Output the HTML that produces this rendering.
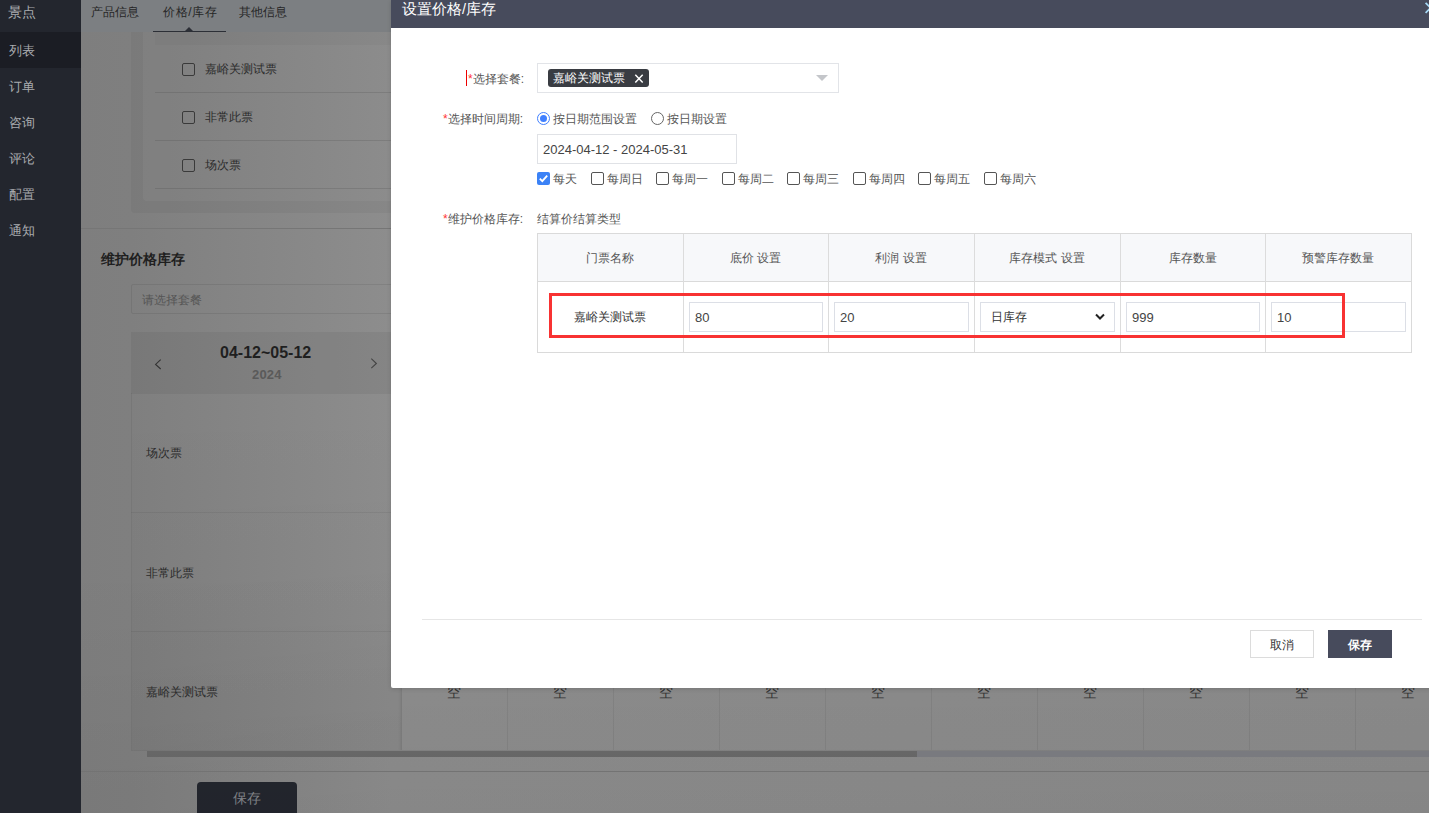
<!DOCTYPE html>
<html><head><meta charset="utf-8">
<style>
*{box-sizing:border-box;margin:0;padding:0}
html,body{width:1429px;height:813px;overflow:hidden}
body{position:relative;font-family:"Liberation Sans",sans-serif;font-size:12px;background:#858585;color:#333}
.a{position:absolute}
.t{position:absolute;white-space:nowrap;line-height:1}
/* sidebar */
#side{left:0;top:0;width:81px;height:813px;background:#23262e}
.si{left:0;width:81px;height:36px;line-height:38px;padding-left:9px;color:#a9abaf;font-size:13px}
/* main bg */
#main{left:81px;top:0;width:1348px;height:813px;background:linear-gradient(90deg,#7e7e7e 0px,#7f7f7f 50px,#8d8d8d 310px,#8b8b8b 100%)}
#topbar{left:81px;top:0;width:1348px;height:32px;background:#7c7f82}
.tab{top:0;height:32px;line-height:25px;font-size:12px;color:#262626}
/* modal */
#modal{left:391px;top:0;width:1050px;height:688px;background:#fff;border-radius:0 0 2px 2px;box-shadow:0 1px 4px rgba(0,0,0,.15)}
#mhead{left:0;top:0;width:1050px;height:28px;background:#474b5c}
.lbl{font-size:12px;color:#555}
.req{color:#f33}
.box{position:absolute;border:1px solid #dcdfe6;background:#fff}
.th{position:absolute;top:0;height:48px;line-height:48px;text-align:center;font-size:12px;color:#555;border-right:1px solid #e0e2e6}
</style></head>
<body>
<div id="main" class="a"></div>
<div id="side" class="a">
  <div class="a si" style="top:-6px;font-size:14px;padding-left:8px;line-height:36px">景点</div>
  <div class="a si" style="top:32px;background:#1b1d24">列表</div>
  <div class="a si" style="top:68px">订单</div>
  <div class="a si" style="top:104px">咨询</div>
  <div class="a si" style="top:140px">评论</div>
  <div class="a si" style="top:176px">配置</div>
  <div class="a si" style="top:212px">通知</div>
</div>
<div id="topbar" class="a"></div>
<div class="t" style="left:91px;top:6px;font-size:12px;color:#262626">产品信息</div>
<div class="t" style="left:163px;top:6px;font-size:12px;letter-spacing:0.6px;color:#262626">价格/库存</div>
<div class="t" style="left:239px;top:6px;font-size:12px;color:#262626">其他信息</div>
<div class="a" style="left:153px;top:31px;width:73px;height:1px;background:#2c2f36"></div>
<div class="a" style="left:185px;top:27px;width:0;height:0;border-left:4px solid transparent;border-right:4px solid transparent;border-bottom:4px solid #2c2f36"></div>

<!-- panel -->
<div class="a" style="left:131px;top:32px;width:300px;height:181px;background:rgba(0,0,0,.04);border-radius:0 0 4px 4px"></div>
<div class="a" style="left:143px;top:32px;width:300px;height:169px;background:rgba(255,255,255,.045);border-radius:0 0 4px 4px"></div>
<div class="a" style="left:155px;top:32px;width:300px;height:13px;background:rgba(0,0,0,.025)"></div>
<div class="a" style="left:155px;top:92px;width:300px;height:1px;background:rgba(0,0,0,.1)"></div>
<div class="a" style="left:155px;top:140px;width:300px;height:1px;background:rgba(0,0,0,.1)"></div>
<div class="a" style="left:155px;top:188px;width:300px;height:1px;background:rgba(0,0,0,.1)"></div>
<div class="a" style="left:182px;top:63px;width:13px;height:13px;border:1px solid #3a3a3a;border-radius:2px"></div>
<div class="a" style="left:182px;top:111px;width:13px;height:13px;border:1px solid #3a3a3a;border-radius:2px"></div>
<div class="a" style="left:182px;top:159px;width:13px;height:13px;border:1px solid #3a3a3a;border-radius:2px"></div>
<div class="t" style="left:205px;top:63px;color:#2b2b2b">嘉峪关测试票</div>
<div class="t" style="left:205px;top:111px;color:#2b2b2b">非常此票</div>
<div class="t" style="left:205px;top:159px;color:#2b2b2b">场次票</div>
<div class="a" style="left:81px;top:228px;width:1348px;height:1px;background:#767676"></div>

<div class="t" style="left:101px;top:252px;font-size:14px;font-weight:bold;color:#1f1f1f">维护价格库存</div>
<div class="a" style="left:131px;top:284px;width:300px;height:30px;border:1px solid rgba(0,0,0,.08);border-radius:2px;background:transparent"></div>
<div class="t" style="left:142px;top:294px;color:#555">请选择套餐</div>

<div class="a" style="left:131px;top:332px;width:1298px;height:61px;background:rgba(0,0,0,.05)"></div>
<div class="t" style="left:220px;top:345px;font-size:16px;font-weight:bold;color:#1f1f1f">04-12~05-12</div>
<div class="t" style="left:252px;top:368px;font-size:13px;letter-spacing:0.2px;font-weight:bold;color:#5a5a5a">2024</div>
<svg class="a" style="left:150px;top:355px" width="15" height="18" viewBox="0 0 15 18"><path d="M10.7 4.6 L5.6 9.4 L10.7 14" fill="none" stroke="#333" stroke-width="1.1"/></svg>
<svg class="a" style="left:365px;top:355px" width="15" height="18" viewBox="0 0 15 18"><path d="M6.3 3.7 L11.4 8.5 L6.3 13.1" fill="none" stroke="#444" stroke-width="1.1"/></svg>
<div class="a" style="left:131px;top:393px;width:1px;height:357px;background:rgba(0,0,0,.06)"></div>
<div class="a" style="left:132px;top:394px;width:269px;height:356px;background:linear-gradient(180deg,rgba(0,0,0,0) 0,rgba(0,0,0,.035) 100%)"></div>
<div class="a" style="left:398px;top:393px;width:3px;height:357px;background:linear-gradient(90deg,rgba(0,0,0,0),rgba(0,0,0,.05))"></div>
<div class="a" style="left:401px;top:393px;width:1px;height:357px;background:rgba(0,0,0,.1)"></div>
<div class="a" style="left:131px;top:393px;width:1298px;height:1px;background:rgba(0,0,0,.05)"></div>
<div class="a" style="left:131px;top:512px;width:1298px;height:1px;background:rgba(0,0,0,.06)"></div>
<div class="a" style="left:131px;top:631px;width:1298px;height:1px;background:rgba(0,0,0,.06)"></div>
<div class="a" style="left:131px;top:750px;width:1298px;height:1px;background:rgba(0,0,0,.06)"></div>
<div class="t" style="left:146px;top:447px;color:#2b2b2b">场次票</div>
<div class="t" style="left:146px;top:567px;color:#2b2b2b">非常此票</div>
<div class="t" style="left:146px;top:686px;color:#2b2b2b">嘉峪关测试票</div>
<div class="t" style="left:401px;width:106px;text-align:center;top:685px;font-size:14px;color:#333">空</div>
<div class="t" style="left:507px;width:106px;text-align:center;top:685px;font-size:14px;color:#333">空</div>
<div class="a" style="left:507px;top:632px;width:1px;height:118px;background:rgba(0,0,0,.06)"></div>
<div class="t" style="left:613px;width:106px;text-align:center;top:685px;font-size:14px;color:#333">空</div>
<div class="a" style="left:613px;top:632px;width:1px;height:118px;background:rgba(0,0,0,.06)"></div>
<div class="t" style="left:719px;width:106px;text-align:center;top:685px;font-size:14px;color:#333">空</div>
<div class="a" style="left:719px;top:632px;width:1px;height:118px;background:rgba(0,0,0,.06)"></div>
<div class="t" style="left:825px;width:106px;text-align:center;top:685px;font-size:14px;color:#333">空</div>
<div class="a" style="left:825px;top:632px;width:1px;height:118px;background:rgba(0,0,0,.06)"></div>
<div class="t" style="left:931px;width:106px;text-align:center;top:685px;font-size:14px;color:#333">空</div>
<div class="a" style="left:931px;top:632px;width:1px;height:118px;background:rgba(0,0,0,.06)"></div>
<div class="t" style="left:1037px;width:106px;text-align:center;top:685px;font-size:14px;color:#333">空</div>
<div class="a" style="left:1037px;top:632px;width:1px;height:118px;background:rgba(0,0,0,.06)"></div>
<div class="t" style="left:1143px;width:106px;text-align:center;top:685px;font-size:14px;color:#333">空</div>
<div class="a" style="left:1143px;top:632px;width:1px;height:118px;background:rgba(0,0,0,.06)"></div>
<div class="t" style="left:1249px;width:106px;text-align:center;top:685px;font-size:14px;color:#333">空</div>
<div class="a" style="left:1249px;top:632px;width:1px;height:118px;background:rgba(0,0,0,.06)"></div>
<div class="t" style="left:1355px;width:106px;text-align:center;top:685px;font-size:14px;color:#333">空</div>
<div class="a" style="left:1355px;top:632px;width:1px;height:118px;background:rgba(0,0,0,.06)"></div>

<div class="a" style="left:147px;top:751px;width:1282px;height:6px;background:#7d7e83"></div>
<div class="a" style="left:147px;top:751px;width:770px;height:6px;background:#6a6a6a"></div>
<div class="a" style="left:81px;top:771px;width:1348px;height:1px;background:#777"></div>
<div class="a" style="left:197px;top:782px;width:100px;height:40px;background:#23262e;border-radius:4px"></div>
<div class="t" style="left:233px;top:791px;font-size:14px;color:#85878c">保存</div>

<div class="a" style="left:81px;top:560px;width:1348px;height:253px;background:linear-gradient(180deg,rgba(0,0,0,0) 0,rgba(0,0,0,.045) 100%);pointer-events:none"></div>
<!-- modal -->
<div id="modal" class="a">
  <div id="mhead" class="a"></div>
  <div class="t" style="left:11px;top:1.5px;font-size:14.5px;color:#fff">设置价格/库存</div>
</div>

<!-- modal content (page coords) -->
<div class="a" style="left:466px;top:70px;width:1px;height:16px;background:#e00"></div>
<div class="t lbl" style="left:468px;top:73px"><span class="req">*</span>选择套餐:</div>
<div class="box" style="left:537px;top:63px;width:302px;height:30px;border-color:#e2e4e8"></div>
<div class="a" style="left:548px;top:69px;width:101px;height:18px;background:#393c42;border-radius:3px"></div>
<div class="t" style="left:553px;top:72px;color:#fff">嘉峪关测试票</div>
<svg class="a" style="left:634px;top:73px" width="10" height="11" viewBox="0 0 10 11"><path d="M1.3 1.8 L8.7 9.5 M8.7 1.8 L1.3 9.5" stroke="#fff" stroke-width="1.5"/></svg>
<div class="a" style="left:816px;top:75px;width:0;height:0;border-left:6px solid transparent;border-right:6px solid transparent;border-top:6px solid #c4c6ca"></div>

<div class="t lbl" style="left:443px;top:113px"><span class="req">*</span>选择时间周期:</div>
<div class="a" style="left:537px;top:112px;width:13px;height:13px;border:1px solid #4080ff;border-radius:50%"></div>
<div class="a" style="left:540px;top:115px;width:7px;height:7px;background:#4080ff;border-radius:50%"></div>
<div class="t lbl" style="left:553px;top:113px">按日期范围设置</div>
<div class="a" style="left:651px;top:112px;width:13px;height:13px;border:1px solid #666;border-radius:50%"></div>
<div class="t lbl" style="left:667px;top:113px">按日期设置</div>
<div class="box" style="left:537px;top:134px;width:200px;height:30px;border-color:#e0e2e6"></div>
<div class="t" style="left:543px;top:143px;font-size:13px;color:#444">2024-04-12 - 2024-05-31</div>

<div class="a" style="left:537px;top:172px;width:13px;height:13px;background:#3b82f6;border-radius:2px"></div>
<svg class="a" style="left:537px;top:172px" width="13" height="13" viewBox="0 0 13 13"><path d="M2.8 6.6 L5.3 9.2 L10.2 3.6" fill="none" stroke="#fff" stroke-width="1.8"/></svg>
<div class="t lbl" style="left:553px;top:173px">每天</div>
<div class="a" style="left:591px;top:172px;width:13px;height:13px;border:1px solid #555;border-radius:2px"></div>
<div class="t lbl" style="left:607px;top:173px">每周日</div>
<div class="a" style="left:656px;top:172px;width:13px;height:13px;border:1px solid #555;border-radius:2px"></div>
<div class="t lbl" style="left:672px;top:173px">每周一</div>
<div class="a" style="left:722px;top:172px;width:13px;height:13px;border:1px solid #555;border-radius:2px"></div>
<div class="t lbl" style="left:738px;top:173px">每周二</div>
<div class="a" style="left:787px;top:172px;width:13px;height:13px;border:1px solid #555;border-radius:2px"></div>
<div class="t lbl" style="left:803px;top:173px">每周三</div>
<div class="a" style="left:853px;top:172px;width:13px;height:13px;border:1px solid #555;border-radius:2px"></div>
<div class="t lbl" style="left:869px;top:173px">每周四</div>
<div class="a" style="left:918px;top:172px;width:13px;height:13px;border:1px solid #555;border-radius:2px"></div>
<div class="t lbl" style="left:934px;top:173px">每周五</div>
<div class="a" style="left:984px;top:172px;width:13px;height:13px;border:1px solid #555;border-radius:2px"></div>
<div class="t lbl" style="left:1000px;top:173px">每周六</div>

<div class="t lbl" style="left:443px;top:213px"><span class="req">*</span>维护价格库存:</div>
<div class="t lbl" style="left:537px;top:213px">结算价结算类型</div>

<div class="a" style="left:537px;top:233px;width:875px;height:120px;border:1px solid #dadada;background:#fff"></div>
<div class="a" style="left:538px;top:234px;width:873px;height:48px;background:#f7f8fa;border-bottom:1px solid #dadada"></div>
<div class="t lbl" style="left:537px;width:146px;text-align:center;top:252px;color:#555">门票名称</div>
<div class="t lbl" style="left:683px;width:145px;text-align:center;top:252px;color:#555">底价 设置</div>
<div class="a" style="left:683px;top:234px;width:1px;height:118px;background:#dcdcdc"></div>
<div class="t lbl" style="left:828px;width:146px;text-align:center;top:252px;color:#555">利润 设置</div>
<div class="a" style="left:828px;top:234px;width:1px;height:118px;background:#dcdcdc"></div>
<div class="t lbl" style="left:974px;width:146px;text-align:center;top:252px;color:#555">库存模式 设置</div>
<div class="a" style="left:974px;top:234px;width:1px;height:118px;background:#dcdcdc"></div>
<div class="t lbl" style="left:1120px;width:145px;text-align:center;top:252px;color:#555">库存数量</div>
<div class="a" style="left:1120px;top:234px;width:1px;height:118px;background:#dcdcdc"></div>
<div class="t lbl" style="left:1265px;width:146px;text-align:center;top:252px;color:#555">预警库存数量</div>
<div class="a" style="left:1265px;top:234px;width:1px;height:118px;background:#dcdcdc"></div>

<div class="t lbl" style="left:574px;top:311px;color:#333">嘉峪关测试票</div>
<div class="box" style="left:689px;top:302px;width:134px;height:30px"></div>
<div class="t" style="left:695px;top:311px;font-size:13px;color:#444">80</div>
<div class="box" style="left:834px;top:302px;width:135px;height:30px"></div>
<div class="t" style="left:840px;top:311px;font-size:13px;color:#444">20</div>
<div class="box" style="left:980px;top:302px;width:135px;height:30px"></div>
<div class="t lbl" style="left:991px;top:311px;color:#333">日库存</div>
<svg class="a" style="left:1094px;top:312px" width="12" height="10" viewBox="0 0 12 10"><path d="M2 2.5 L6 6.5 L10 2.5" fill="none" stroke="#222" stroke-width="2"/></svg>
<div class="box" style="left:1126px;top:302px;width:134px;height:30px"></div>
<div class="t" style="left:1132px;top:311px;font-size:13px;color:#444">999</div>
<div class="box" style="left:1271px;top:302px;width:135px;height:30px"></div>
<div class="t" style="left:1277px;top:311px;font-size:13px;color:#444">10</div>
<div class="a" style="left:549px;top:293px;width:796px;height:45px;border:3px solid #f83232"></div>

<div class="a" style="left:422px;top:619px;width:1000px;height:1px;background:#e6e6e6"></div>
<div class="box" style="left:1250px;top:630px;width:64px;height:28px;border-color:#dcdcdc"></div>
<div class="t" style="left:1270px;top:639px;color:#333">取消</div>
<div class="a" style="left:1328px;top:630px;width:64px;height:28px;background:#474b5c"></div>
<div class="t" style="left:1348px;top:639px;color:#fff;font-weight:bold">保存</div>
<svg class="a" style="left:1420px;top:0" width="20" height="20" viewBox="0 0 20 20"><path d="M5.6 2.8 L15.6 12.9 M5.6 12.9 L15.6 2.8" stroke="#a6d8f4" stroke-width="1.7"/></svg>
</body></html>
